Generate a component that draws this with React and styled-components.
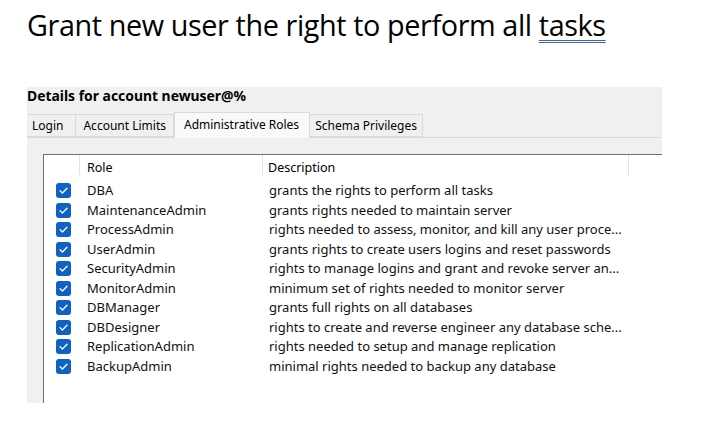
import React from 'react';
import styled, { createGlobalStyle } from 'styled-components';

const GlobalStyle = createGlobalStyle`
  html, body {
    margin: 0;
    padding: 0;
    background: #ffffff;
  }
  body {
    font-family: "Noto Sans", "DejaVu Sans", sans-serif;
    color: #000;
  }
`;

const roles = [
  ['DBA', 'grants the rights to perform all tasks'],
  ['MaintenanceAdmin', 'grants rights needed to maintain server'],
  ['ProcessAdmin', 'rights needed to assess, monitor, and kill any user proce...'],
  ['UserAdmin', 'grants rights to create users logins and reset passwords'],
  ['SecurityAdmin', 'rights to manage logins and grant and revoke server an...'],
  ['MonitorAdmin', 'minimum set of rights needed to monitor server'],
  ['DBManager', 'grants full rights on all databases'],
  ['DBDesigner', 'rights to create and reverse engineer any database sche...'],
  ['ReplicationAdmin', 'rights needed to setup and manage replication'],
  ['BackupAdmin', 'minimal rights needed to backup any database'],
];

const tabs = ['Login', 'Account Limits', 'Administrative Roles', 'Schema Privileges'];

function Checkbox() {
  return (
    <CheckBox>
      <svg width="15" height="15" viewBox="0 0 15 15">
        <polyline points="4,7.6 6.4,10 11,5.2" fill="none" stroke="#fff" strokeWidth="1.3" strokeLinecap="round" strokeLinejoin="round" />
      </svg>
    </CheckBox>
  );
}

function App() {
  return (
    <Page>
      <GlobalStyle />
      <Title>
        Grant new user the right to perform all <Marked>tasks</Marked>
      </Title>
      <Panel>
        <PanelTitle>Details for account newuser@%</PanelTitle>
        <TabStrip>
          {tabs.map((t) => (
            <Tab key={t} active={t === 'Administrative Roles'}>{t}</Tab>
          ))}
        </TabStrip>
        <TabBody>
          <ListBox>
            <HeaderRow>
              <HeadCell />
              <HeadCell>Role</HeadCell>
              <HeadCell>Description</HeadCell>
              <HeadCell last />
            </HeaderRow>
            {roles.map(([name, desc]) => (
              <Row key={name}>
                <CheckCell><Checkbox /></CheckCell>
                <Cell>{name}</Cell>
                <Cell>{desc}</Cell>
              </Row>
            ))}
          </ListBox>
        </TabBody>
      </Panel>
    </Page>
  );
}

const Page = styled.div`
  width: 726px;
  height: 425px;
  overflow: hidden;
  padding-top: 7px;
  box-sizing: border-box;
`;

const Title = styled.h1`
  margin: 0 0 0 27px;
  font-family: "Open Sans", "Noto Sans", sans-serif;
  font-weight: 400;
  font-size: 28.8px;
  letter-spacing: -0.4px;
  line-height: 36px;
  white-space: nowrap;
`;

const Marked = styled.span`
  text-decoration: underline double #3d66b5;
  text-underline-offset: 4px;
  text-decoration-thickness: 1px;
`;

const Panel = styled.div`
  margin: 44px 0 0 27px;
  width: 635px;
  height: 316px;
  background: #f0f0f0;
  display: flex;
  flex-direction: column;
`;

const PanelTitle = styled.div`
  font-size: 13.9px;
  font-weight: 700;
  line-height: 18px;
  white-space: nowrap;
`;

const TabStrip = styled.div`
  display: flex;
  align-items: flex-end;
  height: 25px;
  margin-top: 7px;
  border-bottom: 1px solid #dadada;
`;

const Tab = styled.div`
  font-size: 12px;
  line-height: 18px;
  padding: ${(p) => (p.active ? '3px 10px 4px 9px' : '2px 7px 1px')};
  margin-bottom: ${(p) => (p.active ? '-1px' : '0')};
  background: ${(p) => (p.active ? '#f9f9f9' : '#f0f0f0')};
  border: 1px solid #dadada;
  border-bottom: ${(p) => (p.active ? 'none' : '1px solid #dadada')};
  border-left: ${(p) => (p.active ? '1px solid #dadada' : 'none')};
  white-space: nowrap;
  &:first-child {
    padding: 2px 12px 1px 5px;
    border-left: none;
  }
  &:last-child {
    padding: 2px 5px 1px;
  }
`;

const TabBody = styled.div`
  flex: 1;
  display: flex;
  padding: 16px 0 0 16px;
  background: #f0f0f0;
`;

const ListBox = styled.div`
  flex: 1;
  background: #ffffff;
  border-top: 1px solid #6f6f6f;
  border-left: 1px solid #6f6f6f;
  display: flex;
  flex-direction: column;
`;

const columns = `36px 183px 366px 1fr`;

const HeaderRow = styled.div`
  display: grid;
  grid-template-columns: ${columns};
  height: 26px;
`;

const HeadCell = styled.div`
  font-size: 12.5px;
  line-height: 25px;
  padding-left: 7px;
  height: 20px;
  border-right: ${(p) => (p.last ? 'none' : '1px solid #e3e3e3')};
  &:nth-child(3) {
    padding-left: 5px;
  }
`;

const Row = styled.div`
  display: grid;
  grid-template-columns: ${columns};
  height: 19.5px;
  align-items: center;
`;

const CheckCell = styled.div`
  display: flex;
  padding-left: 12px;
`;

const CheckBox = styled.div`
  width: 15px;
  height: 15px;
  border-radius: 3px;
  background: #0f62c4;
  display: flex;
`;

const Cell = styled.div`
  font-size: 13px;
  line-height: 19px;
  padding-left: 7px;
  white-space: nowrap;
  color: #111;
  &:nth-child(3) {
    padding-left: 6px;
  }
`;

export default App;
